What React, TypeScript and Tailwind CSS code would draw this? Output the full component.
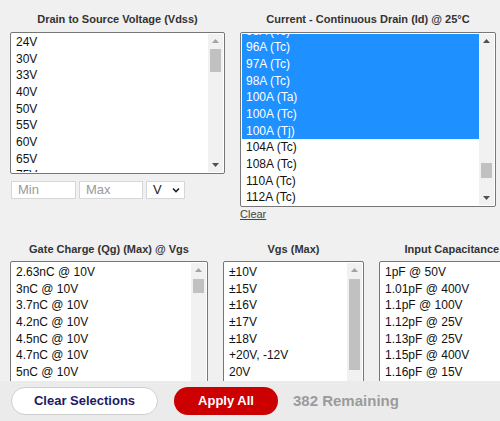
import React from "react";

type Bar = {
  thumb: string; // full class names for thumb placement
  upOff?: boolean;
};

function Arrow({ dir, off }: { dir: "up" | "down"; off?: boolean }) {
  return (
    <div className="flex h-[14px] w-full items-center justify-center">
      <svg width="7" height="4" viewBox="0 0 7 4">
        <polygon
          points={dir === "up" ? "0,4 7,4 3.5,0" : "0,0 7,0 3.5,4"}
          fill={off ? "#a3a3a3" : "#505050"}
        />
      </svg>
    </div>
  );
}

function ScrollBar({ bar }: { bar: Bar }) {
  return (
    <div className="flex w-[15px] shrink-0 flex-col bg-[#f1f1f1]">
      <Arrow dir="up" off={bar.upOff} />
      <div className="flex flex-1 flex-col px-[2px]">
        <div className={`w-full bg-[#c1c1c1] ${bar.thumb}`} />
      </div>
      <Arrow dir="down" />
    </div>
  );
}

function ListBox({
  items,
  selected = [],
  box,
  offset = "",
  bar,
}: {
  items: string[];
  selected?: string[];
  box: string;
  offset?: string;
  bar?: Bar;
}) {
  return (
    <div
      className={`flex overflow-hidden rounded-[2px] border border-[#767676] bg-white p-px ${box}`}
    >
      <div className="min-w-0 flex-1 overflow-hidden">
        <div className={offset}>
          {items.map((it, i) => (
            <div
              key={i}
              className={`h-[16.67px] whitespace-nowrap pl-[4px] text-[12px] leading-[16.67px] ${
                selected.includes(it + i)
                  ? "bg-[#1e90ff] text-white"
                  : "text-[#111]"
              }`}
            >
              {it}
            </div>
          ))}
        </div>
      </div>
      {bar && <ScrollBar bar={bar} />}
    </div>
  );
}

function Title({ children }: { children: React.ReactNode }) {
  return (
    <div className="h-[18px] whitespace-nowrap text-center text-[11px] font-bold leading-[18px] text-[#333]">
      {children}
    </div>
  );
}

const voltages = ["24V", "30V", "33V", "40V", "50V", "55V", "60V", "65V", "75V", "80V"];
const currents = [
  "95A (Tc)",
  "96A (Tc)",
  "97A (Tc)",
  "98A (Tc)",
  "100A (Ta)",
  "100A (Tc)",
  "100A (Tj)",
  "104A (Tc)",
  "108A (Tc)",
  "110A (Tc)",
  "112A (Tc)",
  "115A (Tc)",
];
const currentSel = currents.slice(0, 7).map((c, i) => c + i);
const gates = [
  "2.63nC @ 10V",
  "3nC @ 10V",
  "3.7nC @ 10V",
  "4.2nC @ 10V",
  "4.5nC @ 10V",
  "4.7nC @ 10V",
  "5nC @ 10V",
  "5.2nC @ 10V",
];
const vgs = ["±10V", "±15V", "±16V", "±17V", "±18V", "+20V, -12V", "20V", "±20V"];
const caps = [
  "1pF @ 50V",
  "1.01pF @ 400V",
  "1.1pF @ 100V",
  "1.12pF @ 25V",
  "1.13pF @ 25V",
  "1.15pF @ 400V",
  "1.16pF @ 15V",
  "1.2pF @ 25V",
];

export default function App() {
  return (
    <div className="flex h-[421px] w-[500px] flex-col overflow-hidden bg-[#f0f0f0] font-['Liberation_Sans',Arial,sans-serif]">
      <div className="min-h-0 flex-1 overflow-hidden pl-[10px] pt-[10px]">
        {/* top row */}
        <div className="flex gap-[15px]">
          <div className="w-[215px] shrink-0">
            <Title>Drain to Source Voltage (Vdss)</Title>
            <ListBox
              items={voltages}
              box="mt-[4px] h-[142px]"
              bar={{ thumb: "mt-[1px] h-[23px]", upOff: true }}
            />
            <div className="mt-[7px] flex gap-[3px] pl-px">
              <input
                placeholder="Min"
                className="h-[18px] w-[65px] border border-[#d6d6d6] bg-white px-[6px] text-[13px] text-[#333] outline-none placeholder:text-[#9a9a9a]"
              />
              <input
                placeholder="Max"
                className="h-[18px] w-[64px] border border-[#d6d6d6] bg-white px-[6px] text-[13px] text-[#333] outline-none placeholder:text-[#9a9a9a]"
              />
              <div className="flex h-[18px] w-[39px] items-center border border-[#d6d6d6] bg-white pl-[6px] text-[13px] text-[#222]">
                <span>V</span>
                <svg
                  className="ml-[10px]"
                  width="8"
                  height="6"
                  viewBox="0 0 8 6"
                >
                  <path
                    d="M1 1.5 L4 4.5 L7 1.5"
                    fill="none"
                    stroke="#222"
                    strokeWidth="1.6"
                  />
                </svg>
              </div>
            </div>
          </div>
          <div className="w-[256px] shrink-0">
            <Title>Current - Continuous Drain (Id) @ 25°C</Title>
            <ListBox
              items={currents}
              selected={currentSel}
              box="mt-[4px] h-[175px]"
              offset="-mt-[11.3px]"
              bar={{ thumb: "mt-[115px] h-[15px]" }}
            />
            <a className="mt-px block text-[11px] leading-[13px] text-[#444] underline">
              Clear
            </a>
          </div>
        </div>

        {/* bottom row */}
        <div className="mt-[19px] flex gap-[15px]">
          <div className="w-[198px] shrink-0">
            <Title>Gate Charge (Qg) (Max) @ Vgs</Title>
            <ListBox
              items={gates}
              box="mt-[3px] h-[160px]"
              offset="pt-[1px]"
              bar={{ thumb: "mt-[2px] h-[14px]", upOff: true }}
            />
          </div>
          <div className="w-[141px] shrink-0">
            <Title>Vgs (Max)</Title>
            <ListBox
              items={vgs}
              box="mt-[3px] h-[160px]"
              offset="pt-[1px]"
              bar={{ thumb: "mt-[2px] h-[91px]", upOff: true }}
            />
          </div>
          <div className="w-[248px] shrink-0">
            <Title>Input Capacitance (Ciss) (Max) @ Vds</Title>
            <ListBox items={caps} box="mt-[3px] h-[160px]" offset="pt-[1px]" />
          </div>
        </div>
      </div>

      {/* footer */}
      <div className="flex h-[40px] shrink-0 items-center bg-[#ebebeb] pl-[11px]">
        <button className="h-[28px] w-[147px] rounded-full border border-[#cfcfcf] bg-white text-[13px] font-bold text-[#1c1a66]">
          Clear Selections
        </button>
        <button className="ml-[16px] h-[28px] w-[104px] rounded-full bg-[#cc0000] text-[13px] font-bold text-white">
          Apply All
        </button>
        <span className="ml-[15px] text-[15px] font-bold text-[#9b9b9b]">
          382 Remaining
        </span>
      </div>
    </div>
  );
}
